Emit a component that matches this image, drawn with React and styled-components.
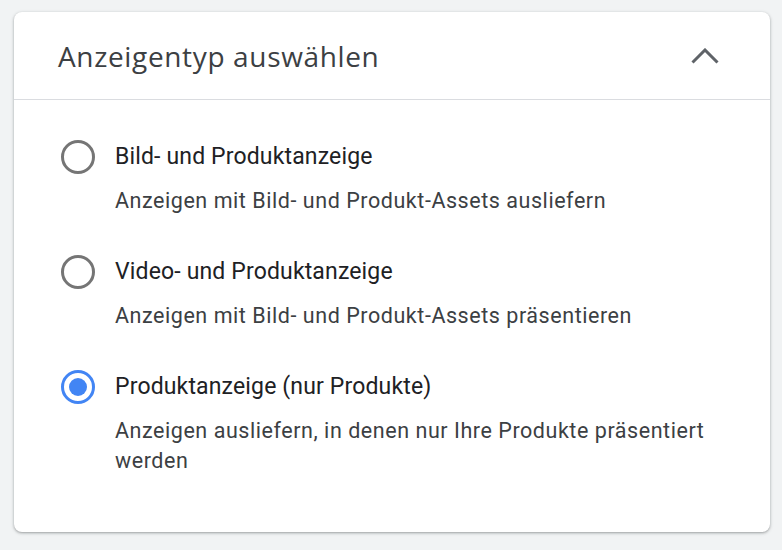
import React, { useState } from 'react';
import styled, { createGlobalStyle } from 'styled-components';

const GlobalStyle = createGlobalStyle`
  html, body {
    margin: 0;
    background: #f1f3f4;
  }
  body {
    font-family: Roboto, "Liberation Sans", sans-serif;
  }
`;

const options = [
  {
    id: 'bild',
    label: 'Bild- und Produktanzeige',
    desc: 'Anzeigen mit Bild- und Produkt-Assets ausliefern',
  },
  {
    id: 'video',
    label: 'Video- und Produktanzeige',
    desc: 'Anzeigen mit Bild- und Produkt-Assets präsentieren',
  },
  {
    id: 'produkt',
    label: 'Produktanzeige (nur Produkte)',
    desc: 'Anzeigen ausliefern, in denen nur Ihre Produkte präsentiert werden',
  },
];

function App() {
  const [selected, setSelected] = useState('produkt');

  return (
    <Page>
      <GlobalStyle />
      <Card>
        <Header>
          <Title>Anzeigentyp auswählen</Title>
          <Chevron viewBox="0 0 28 16" aria-hidden="true">
            <path d="M1.5 14.5 L14 2 L26.5 14.5" />
          </Chevron>
        </Header>
        <List>
          {options.map((o) => (
            <Option key={o.id} onClick={() => setSelected(o.id)}>
              <Radio $checked={selected === o.id} />
              <Texts>
                <Label>{o.label}</Label>
                <Desc>{o.desc}</Desc>
              </Texts>
            </Option>
          ))}
        </List>
      </Card>
    </Page>
  );
}

const Page = styled.div`
  padding: 12px 12px 18px 14px;
  height: 550px;
  box-sizing: border-box;
`;

const Card = styled.div`
  background: #fff;
  border-radius: 8px;
  box-shadow: 0 1px 2px rgba(60, 64, 67, 0.3), 0 1px 3px 1px rgba(60, 64, 67, 0.15);
  height: 520px;
  box-sizing: border-box;
  overflow: hidden;
`;

const Header = styled.div`
  display: flex;
  align-items: center;
  justify-content: space-between;
  height: 87px;
  padding: 0 51px 0 44px;
  border-bottom: 1px solid #dadce0;
`;

const Title = styled.h2`
  margin: 0;
  font-family: "Open Sans", Roboto, sans-serif;
  font-weight: 400;
  font-size: 28px;
  letter-spacing: 0.65px;
  color: #3c4043;
`;

const Chevron = styled.svg`
  width: 28px;
  height: 16px;
  fill: none;
  stroke: #5f6368;
  stroke-width: 3;
`;

const List = styled.div`
  display: flex;
  flex-direction: column;
  gap: 39px;
  padding: 40px 40px 0 47px;
`;

const Option = styled.div`
  display: flex;
  align-items: flex-start;
  gap: 20px;
  cursor: pointer;
`;

const Radio = styled.span`
  flex: none;
  width: 34px;
  height: 34px;
  box-sizing: border-box;
  border-radius: 50%;
  border: 3px solid ${(p) => (p.$checked ? '#4285f4' : '#757575')};
  display: flex;
  align-items: center;
  justify-content: center;
  &::after {
    content: '';
    width: 18px;
    height: 18px;
    border-radius: 50%;
    background: #4285f4;
    display: ${(p) => (p.$checked ? 'block' : 'none')};
  }
`;

const Texts = styled.div`
  display: flex;
  flex-direction: column;
  padding-top: 3px;
`;

const Label = styled.div`
  font-size: 23px;
  line-height: 28px;
  letter-spacing: 0.15px;
  color: #202124;
`;

const Desc = styled.div`
  margin-top: 15px;
  font-size: 21.5px;
  line-height: 30px;
  letter-spacing: 0.55px;
  color: #3c4043;
`;

export default App;
